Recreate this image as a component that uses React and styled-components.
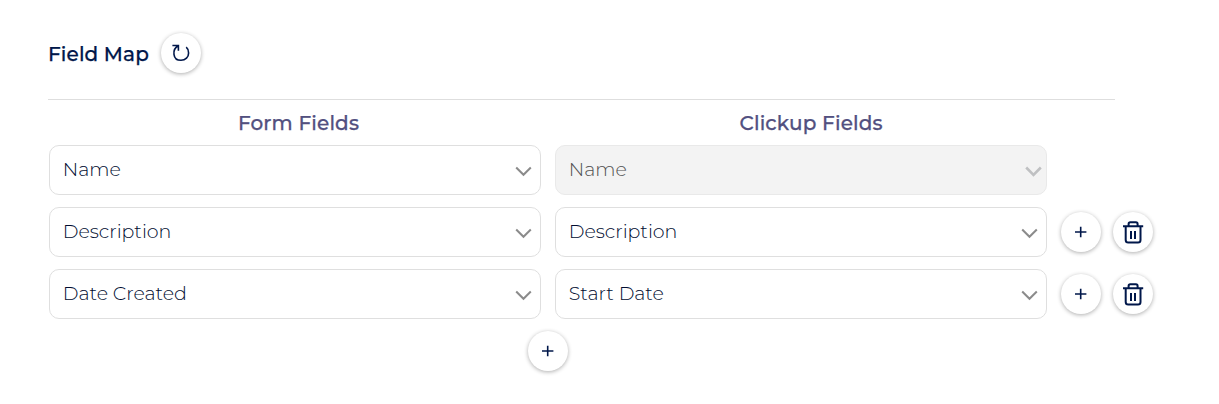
import React from "react";
import styled, { createGlobalStyle } from "styled-components";

const GlobalStyle = createGlobalStyle`
  * { box-sizing: border-box; }
  body { margin: 0; background: #fff; font-family: Montserrat, Inter, sans-serif; color: #00174a; }
`;

const Page = styled.main`
  padding: 33px 48px 0;
  height: 404px;
`;

const TitleBar = styled.header`
  display: flex;
  align-items: center;
  gap: 12px;
  height: 40px;
`;

const Title = styled.h1`
  margin: 0;
  width: 101px;
  padding-top: 2px;
  font-size: 20px;
  font-weight: 500;
  line-height: 24px;
  letter-spacing: 0.12px;
  -webkit-text-stroke: 0.25px currentColor;
  white-space: nowrap;
`;

const Divider = styled.hr`
  width: 1067px;
  height: 1px;
  margin: 26px 0 0;
  border: 0;
  background: #dedede;
`;

const Headings = styled.div`
  display: flex;
  gap: 14px;
  padding: 11px 0 0 1px;
`;

const Heading = styled.h2`
  width: 492px;
  margin: 0;
  padding-left: ${(p) => p.$indent}px;
  font-size: 20px;
  font-weight: 500;
  line-height: 24px;
  letter-spacing: 0.15px;
  -webkit-text-stroke: 0.25px currentColor;
  color: #525080;
`;

const Rows = styled.div`
  display: flex;
  flex-direction: column;
  gap: 12px;
  padding: 10px 0 0 1px;
`;

const Row = styled.div`
  display: flex;
  align-items: center;
  height: 50px;
`;

const Select = styled.button`
  display: flex;
  align-items: center;
  justify-content: space-between;
  width: 492px;
  height: 50px;
  margin-right: 14px;
  padding: 0 ${(p) => (p.disabled ? 4 : 8)}px 0 12.8px;
  border: 1px solid ${(p) => (p.disabled ? "#e9e9e9" : "#dfdfdf")};
  border-radius: 10px;
  background: ${(p) => (p.disabled ? "#f3f3f3" : "#fff")};
  color: ${(p) => (p.disabled ? "#505050" : "#000c30")};
  font-family: inherit;
  font-size: 19px;
  font-weight: 300;
  text-align: left;
`;

const Value = styled.span`
  line-height: 24px;
  letter-spacing: -0.03px;
`;

const Chevron = styled.svg`
  width: 17px;
  height: 11px;
  margin-top: 3px;
  fill: none;
  stroke: ${(p) => (p.$muted ? "#bfc0c2" : "#8b8b8b")};
  stroke-width: ${(p) => (p.$muted ? 2.6 : 2)};
`;

const RoundButton = styled.button`
  display: flex;
  align-items: center;
  justify-content: center;
  width: 40px;
  height: 40px;
  margin-right: ${(p) => p.$gap || 0}px;
  padding: 0;
  border: 0;
  border-radius: 50%;
  background: #fff;
  color: #00174a;
  box-shadow: 0 1px 4px rgba(0, 0, 0, 0.32);
`;

const Footer = styled.footer`
  display: flex;
  padding: 12px 0 0 480px;
`;

const Icon = styled.svg`
  display: block;
  fill: none;
  stroke: currentColor;
`;

const PlusIcon = () => (
  <Icon width="12" height="12" viewBox="0 0 12 12" strokeWidth="1.6">
    <path d="M0 6h11.4M5.7 .8v10.4" />
  </Icon>
);

const RefreshIcon = () => (
  <Icon width="20" height="20" viewBox="0 0 20 20" strokeWidth="1.6">
    <path d="M1.4 2.5h6v5.2M7.2 2.8C1 6.2 1.2 17.3 10 17.3c4.5 0 7.6-3.3 7.6-7.4 0-2.4-.7-4.3-2.4-5.7" />
  </Icon>
);

const TrashIcon = () => (
  <Icon width="22" height="24" viewBox="0 0 22 24" strokeWidth="2">
    <path d="M1 6.2h20.2M6.6 6V4c0-1 .6-1.7 1.7-1.7h5.6c1.1 0 1.7.7 1.7 1.7v2M3.7 7v13c0 1.6.9 2.5 2.5 2.5h9.8c1.6 0 2.5-.9 2.5-2.5V7M9 11v8M13 11v8" />
  </Icon>
);

const Field = ({ label, disabled }) => (
  <Select disabled={disabled}>
    <Value>{label}</Value>
    <Chevron viewBox="0 0 17 11" $muted={disabled}>
      <path d="M1.2 1.5l7.3 7.3 7.3-7.3" />
    </Chevron>
  </Select>
);

const rows = [
  { form: "Name", target: "Name", locked: true },
  { form: "Description", target: "Description" },
  { form: "Date Created", target: "Start Date" },
];

export default function App() {
  return (
    <Page>
      <GlobalStyle />
      <TitleBar>
        <Title>Field Map</Title>
        <RoundButton aria-label="Refresh fields"><RefreshIcon /></RoundButton>
      </TitleBar>
      <Divider />
      <Headings>
        <Heading $indent={189}>Form Fields</Heading>
        <Heading $indent={184.5}>Clickup Fields</Heading>
      </Headings>
      <Rows>
        {rows.map(({ form, target, locked }) => (
          <Row key={form}>
            <Field label={form} />
            <Field label={target} disabled={locked} />
            {!locked && (
              <>
                <RoundButton $gap={12} aria-label="Add field"><PlusIcon /></RoundButton>
                <RoundButton aria-label="Delete field"><TrashIcon /></RoundButton>
              </>
            )}
          </Row>
        ))}
      </Rows>
      <Footer>
        <RoundButton aria-label="Add field"><PlusIcon /></RoundButton>
      </Footer>
    </Page>
  );
}
